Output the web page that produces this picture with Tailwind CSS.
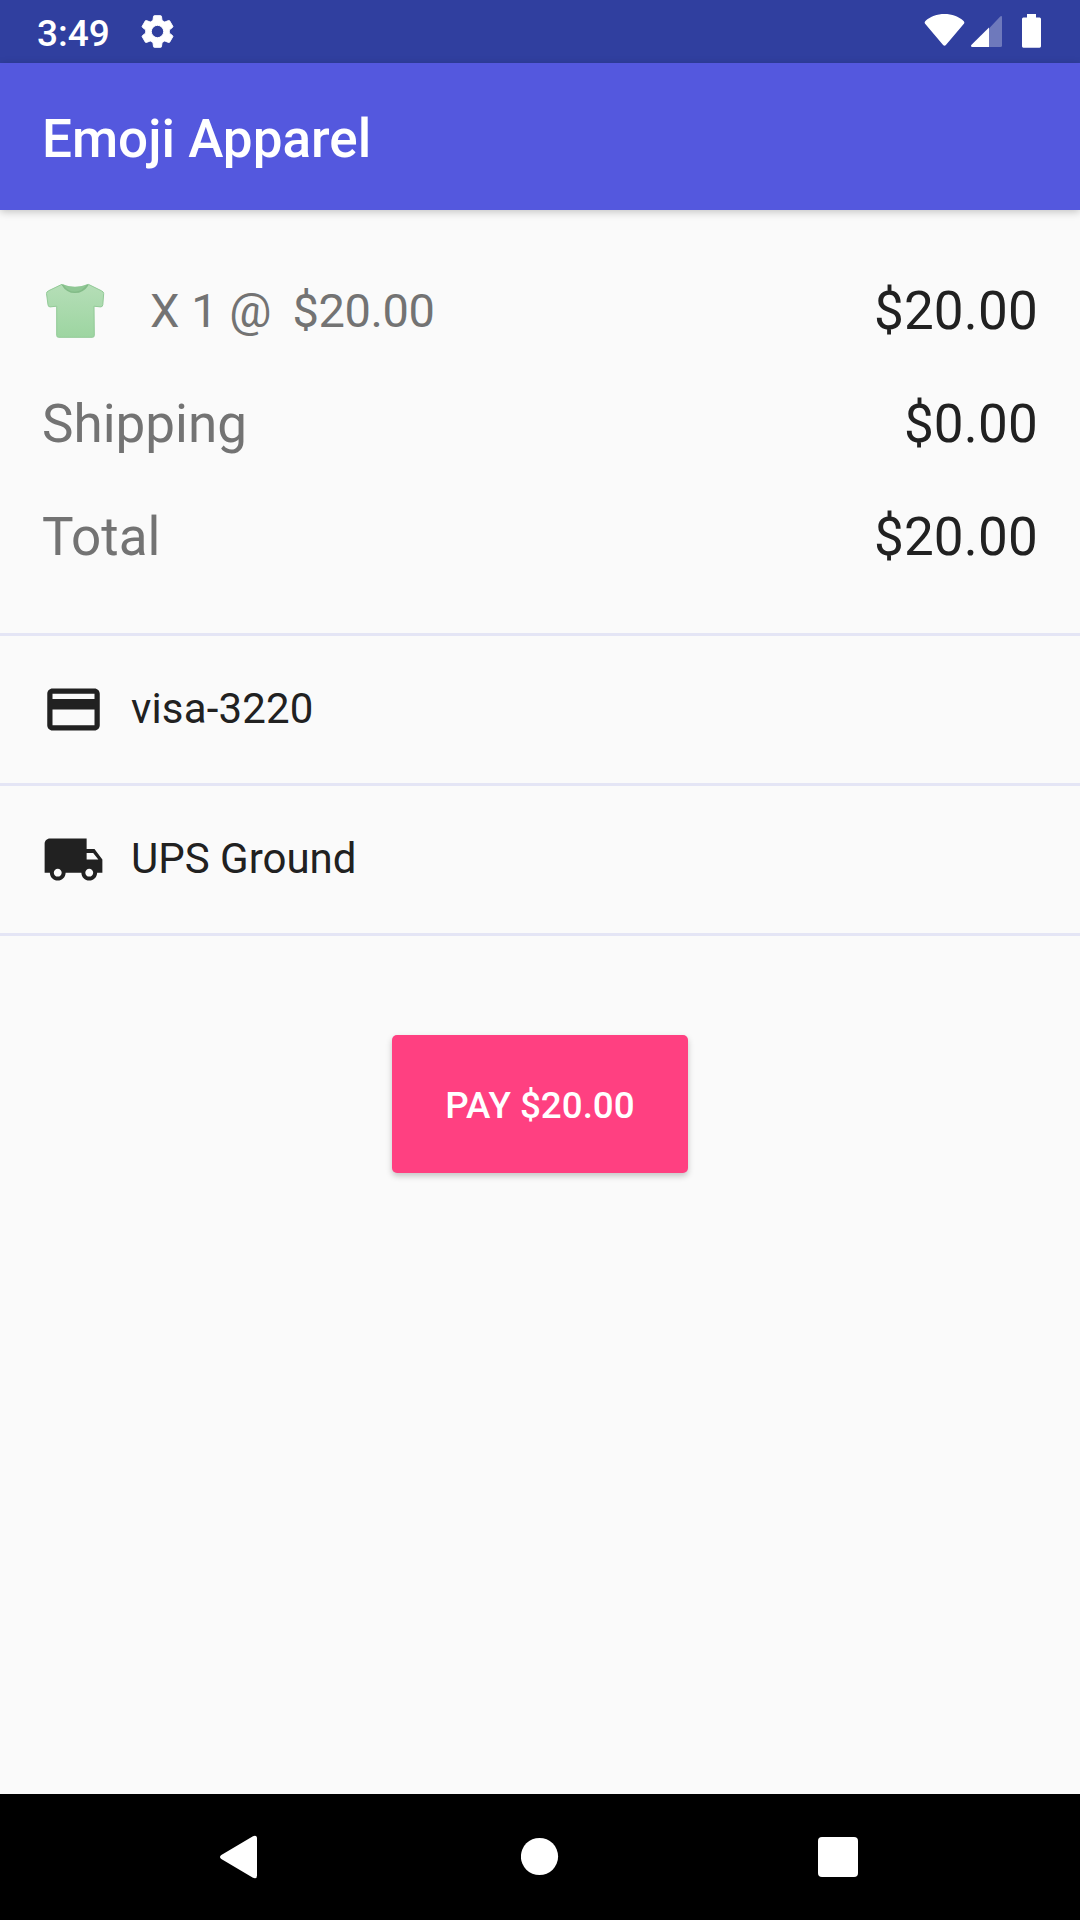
<!DOCTYPE html>
<html lang="en">
<head>
<meta charset="utf-8">
<title>Emoji Apparel</title>
<script src="https://cdn.jsdelivr.net/npm/@tailwindcss/browser@4"></script>
</head>
<body class="flex h-[1920px] w-[1080px] flex-col overflow-hidden bg-[#fafafa] font-[Roboto,sans-serif] text-[#212121]">
  <!-- Status bar -->
  <div class="flex h-[63px] shrink-0 items-center justify-between bg-[#303f9f] pl-[37px] pr-[39px] text-white">
    <div class="flex items-center">
      <span class="w-[100.5px] pt-1 text-[37px] leading-[63px] font-medium">3:49</span>
      <svg class="h-[39px] w-[39px]" viewBox="-.3 -.3 24.6 24.6" fill="currentColor" stroke="currentColor" stroke-width=".6" stroke-linejoin="round"><path d="M19.43 12.98c.04-.32.07-.64.07-.98s-.03-.66-.07-.98l2.11-1.65c.19-.15.24-.42.12-.64l-2-3.46c-.12-.22-.39-.3-.61-.22l-2.49 1c-.52-.4-1.080-.73-1.690-.98l-.38-2.650C14.460 2.180 14.250 2 14 2h-4c-.25 0-.46.18-.49.42l-.38 2.650c-.61.25-1.170.59-1.690.98l-2.490-1c-.23-.09-.49 0-.61.22l-2 3.460c-.13.22-.07.49.12.64l2.110 1.650c-.04.32-.07.65-.07.98s.03.66.07.98l-2.110 1.650c-.19.15-.24.42-.12.64l2 3.460c.12.22.39.3.61.22l2.490-1c.52.4 1.080.73 1.690.98l.38 2.650c.03.24.24.42.49.42h4c.25 0 .46-.18.49-.42l.38-2.650c.61-.25 1.170-.59 1.690-.98l2.490 1c.23.09.49 0 .61-.22l2-3.460c.12-.22.07-.49-.12-.64l-2.110-1.650zM12 15.900a3.900 3.900 0 1 1 0-7.800 3.900 3.900 0 0 1 0 7.800z"/></svg>
    </div>
    <div class="flex items-center">
      <svg class="h-[63px] w-[41px]" viewBox="0 0 41 63" fill="currentColor"><path d="M.9 23.4Q.1 22 1.4 20.900C6.500 16.500 13 14.100 20.500 14.100S34.500 16.500 39.600 20.900Q40.900 22 40.100 23.400L21.900 45Q20.500 46.500 19.100 45Z"/></svg>
      <svg class="ml-[6px] h-[63px] w-[31px]" viewBox="0 0 31 63" fill="currentColor"><path fill-opacity=".3" d="M18 28.500 29.200 16.600Q31 15.200 31 17.500V45.500Q31 47 29.500 47H18Z"/><path d="M18 27.500V47H1.300Q-.7 46.800.3 44.900Z"/></svg>
      <svg class="ml-5 h-[63px] w-[19px]" viewBox="0 0 19 63" fill="currentColor"><path d="M5 14h9v3.500h3.600Q19 17.500 19 19v27.300Q19 47.700 17.600 47.700H1.400Q0 47.700 0 46.300V19Q0 17.500 1.400 17.500H5Z"/></svg>
    </div>
  </div>

  <!-- App bar -->
  <header class="flex h-[147px] shrink-0 items-center bg-[#5458de] pl-[42px] pt-[5px] shadow-[0_2px_8px_rgba(0,0,0,0.22)]">
    <h1 class="text-[53px] leading-[62px] font-medium text-white">Emoji Apparel</h1>
  </header>

  <main class="flex grow flex-col">
    <!-- Order summary -->
    <section class="flex flex-col gap-px border-b-[3px] border-[#e4e5f5] px-[42px] pt-[45px] pb-10 text-[53px] leading-[112px]">
      <div class="flex h-[112px] items-center justify-between">
        <div class="flex items-center text-[47px] text-[#737373]">
          <svg class="h-[60px] w-[64px]" viewBox="0 0 64 60">
            <defs><linearGradient id="shirt" x1="0" y1="0" x2="0" y2="1"><stop offset="0" stop-color="#b5deb7"/><stop offset="1" stop-color="#9dd5a1"/></linearGradient></defs>
            <path d="M20 3Q33 8.500 46 3L44 9Q33 16 22 9Z" fill="#8fc794"/>
            <path d="M20 3.300 6.500 9.800Q4.400 10.900 4.500 12.500L6 23.800Q6.200 26 8.200 25.900L14.700 25.200V54.500Q14.700 56.300 16.500 56.300H50.500Q52.300 56.300 52.300 54.500L52 25.200 58.500 25.900Q60.600 26 60.800 23.800L61.700 12.500Q61.700 10.900 59.500 9.800L46.300 3.300Q42 10.800 33 10.800T20 3.300Z" fill="url(#shirt)" stroke="#92ca97" stroke-width="1"/>
            <path d="M20.500 3.800Q25 11.300 33 11.300T45.800 3.800" fill="none" stroke="#83bc88" stroke-width="1.600"/>
          </svg>
          <span class="ml-11 whitespace-pre">X 1 @</span>
          <span class="ml-[21px] tracking-[-0.4px]">$20.00</span>
        </div>
        <span class="tracking-[0.2px]">$20.00</span>
      </div>
      <div class="flex justify-between"><span class="text-[#737373]">Shipping</span><span class="tracking-[0.2px]">$0.00</span></div>
      <div class="flex justify-between"><span class="text-[#737373]">Total</span><span class="tracking-[0.2px]">$20.00</span></div>
    </section>

    <!-- Payment and delivery -->
    <div class="flex h-[150px] items-center border-b-[3px] border-[#e4e5f5] pl-[42px] text-[42px]">
      <svg class="h-[63px] w-[63px]" viewBox="0 0 24 24" fill="currentColor"><path d="M20 4H4c-1.110 0-1.990.89-1.990 2L2 18c0 1.110.89 2 2 2h16c1.110 0 2-.89 2-2V6c0-1.110-.89-2-2-2zm0 14H4v-6h16v6zm0-10H4V6h16v2z"/></svg>
      <span class="ml-[26px] pb-[2px] tracking-[0.15px]">visa-3220</span>
    </div>
    <div class="flex h-[150px] items-center border-b-[3px] border-[#e4e5f5] pl-[42px] text-[42px]">
      <svg class="h-[63px] w-[63px]" viewBox="0 0 24 24" fill="currentColor"><path d="M20 8h-3V4H3c-1.100 0-2 .9-2 2v11h2c0 1.660 1.340 3 3 3s3-1.340 3-3h6c0 1.660 1.340 3 3 3s3-1.340 3-3h2v-5l-3-4zM6 18.500c-.83 0-1.500-.67-1.500-1.500s.67-1.500 1.500-1.500 1.500.67 1.500 1.500-.67 1.500-1.500 1.500zm13.500-9l1.960 2.500H17V9.500h2.500zm-1.500 9c-.83 0-1.500-.67-1.500-1.500s.67-1.500 1.500-1.500 1.500.67 1.500 1.500-.67 1.500-1.500 1.500z"/></svg>
      <span class="ml-[26px] pb-[2px]">UPS Ground</span>
    </div>

    <button class="mt-[99px] h-[138px] w-[296px] self-center rounded-[5px] bg-[#ff4081] pt-[3px] text-[36.75px] font-medium text-white shadow-[0_3px_6px_rgba(0,0,0,0.22)]">PAY $20.00</button>
  </main>

  <!-- System navigation -->
  <nav class="flex h-[126px] shrink-0 items-center bg-black pl-[219px] text-white">
    <svg class="h-[126px] w-[40px]" viewBox="0 0 40 126" fill="currentColor"><path d="M2.300 61 33.500 42.400Q38 40.500 38 44.500V81.500Q38 85.500 33.500 83.600L2.300 65Q-.3 63 2.300 61Z"/></svg>
    <svg class="ml-[262px] h-[126px] w-[38px]" viewBox="0 0 38 126" fill="currentColor"><circle cx="18.500" cy="62.500" r="18.600"/></svg>
    <svg class="ml-[259px] h-[126px] w-[40px]" viewBox="0 0 40 126" fill="currentColor"><rect y="43" width="40" height="40" rx="4"/></svg>
  </nav>
</body>
</html>
